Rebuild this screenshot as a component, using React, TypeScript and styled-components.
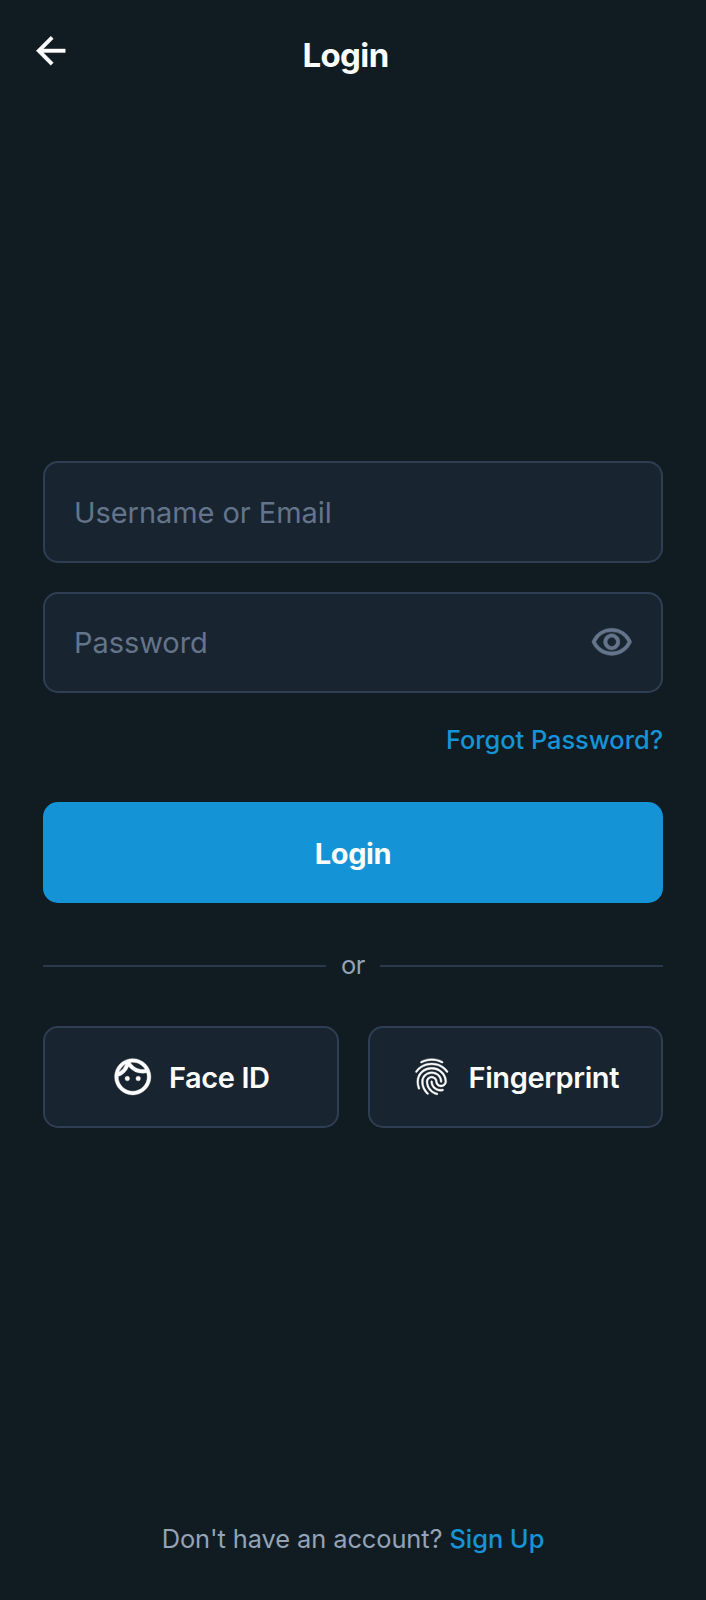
import React from "react";
import styled, { createGlobalStyle } from "styled-components";
import { MdArrowBack, MdOutlineVisibility, MdOutlineFace, MdFingerprint } from "react-icons/md";

const Global = createGlobalStyle`
  *, *::before, *::after { box-sizing: border-box; }
  body { margin: 0; background: #111c22; font-family: Inter, sans-serif; }
  button, input { font: inherit; }
  svg { flex: none; stroke-width: 0.22px; stroke-linejoin: round; }
  svg path[fill="none"] { stroke: none; }
`;
const Screen = styled.div`
  width: 706px;
  height: 1600px;
  display: flex;
  flex-direction: column;
  background: #111c22;
  color: #fff;
`;
const Header = styled.header`
  height: 110px;
  display: grid;
  grid-template-columns: 58px 1fr 102px;
  align-items: center;
  padding: 0 0 0 29px;
`;
const BackButton = styled.button`
  display: flex;
  padding: 0 0 9px;
  border: 0;
  background: none;
  color: #fff;
`;
const Title = styled.h1`
  margin: 0;
  font-size: 33px;
  font-weight: 700;
  letter-spacing: -0.6px;
  text-align: center;
`;
const Main = styled.main`
  flex: 1;
  padding: 351px 43px 0;
`;
const Field = styled.label`
  display: flex;
  align-items: center;
  height: 101.5px;
  margin-bottom: 29px;
  padding: 0 28px 0 29px;
  border: 2px solid #2f3e53;
  border-radius: 15px;
  background: #18242f;
  color: #64748b;
`;
const Input = styled.input`
  flex: 1;
  min-width: 0;
  padding: 1px 0 0;
  border: 0;
  outline: 0;
  background: none;
  color: #fff;
  font-size: 29px;
  letter-spacing: -0.06px;
  &::placeholder { color: #64748b; opacity: 1; }
`;
const ForgotRow = styled.div`
  display: flex;
  justify-content: flex-end;
  height: 80px;
  padding-top: 2px;
`;
const Link = styled.a`
  color: #1594d7;
  font-size: 25.4px;
  font-weight: 500;
  letter-spacing: -0.03px;
`;
const LoginButton = styled.button`
  display: block;
  width: 100%;
  height: 101px;
  padding: 1px 0 0;
  border: 0;
  border-radius: 15px;
  background: #1493d6;
  color: #fff;
  font-size: 29px;
  font-weight: 700;
  letter-spacing: -0.4px;
`;
const Divider = styled.div`
  display: flex;
  align-items: center;
  gap: 14.5px;
  height: 123px;
  padding-top: 2px;
  color: #94a3b8;
  font-size: 25.4px;
  letter-spacing: -0.3px;
  &::before, &::after { content: ""; flex: 1; height: 2px; background: #2b394d; }
`;
const DividerText = styled.span`
  padding-bottom: 2px;
`;
const Choices = styled.div`
  display: grid;
  grid-template-columns: 1fr 1fr;
  gap: 29px;
`;
const Choice = styled.button`
  display: flex;
  align-items: center;
  justify-content: center;
  gap: 14.5px;
  height: 101.5px;
  padding: 0 1px 0 0;
  border: 2px solid #2f3e53;
  border-radius: 15px;
  background: #18242f;
  color: #fff;
  font-size: 29px;
  font-weight: 600;
  letter-spacing: -0.4px;
`;
const ChoiceText = styled.span`
  padding-top: 2px;
`;
const Footer = styled.footer`
  height: 77px;
  color: #94a3b8;
  font-size: 25.4px;
  letter-spacing: -0.08px;
  text-align: center;
`;

export default function App() {
  return (
    <Screen>
      <Global />
      <Header>
        <BackButton aria-label="Back"><MdArrowBack size={43.5} /></BackButton>
        <Title>Login</Title>
      </Header>
      <Main>
        <Field><Input placeholder="Username or Email" /></Field>
        <Field><Input type="password" placeholder="Password" /><MdOutlineVisibility size={43.5} /></Field>
        <ForgotRow><Link>Forgot Password?</Link></ForgotRow>
        <LoginButton>Login</LoginButton>
        <Divider><DividerText>or</DividerText></Divider>
        <Choices>
          <Choice><MdOutlineFace size={43.5} /><ChoiceText>Face ID</ChoiceText></Choice>
          <Choice><MdFingerprint size={43.5} /><ChoiceText>Fingerprint</ChoiceText></Choice>
        </Choices>
      </Main>
      <Footer>Don't have an account? <Link>Sign Up</Link></Footer>
    </Screen>
  );
}
